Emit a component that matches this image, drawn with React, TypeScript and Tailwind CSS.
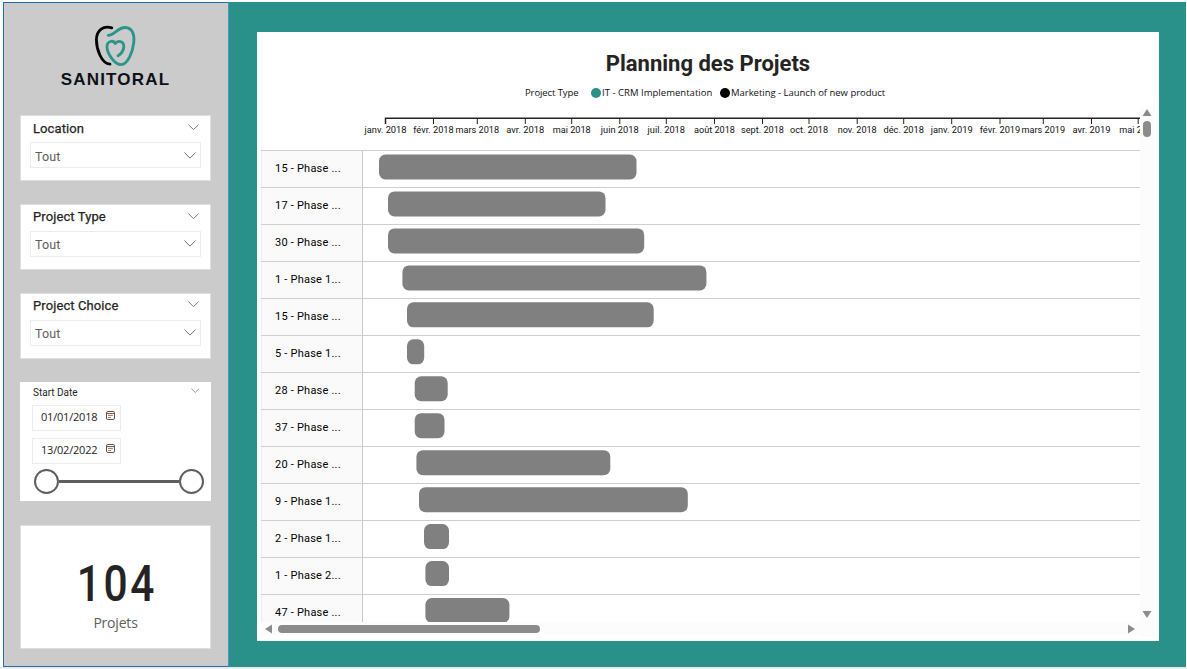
import React from "react";

const rows = [
  { label: "15 - Phase ...", start: 379, end: 636.5 },
  { label: "17 - Phase ...", start: 388, end: 605.5 },
  { label: "30 - Phase ...", start: 388, end: 644.2 },
  { label: "1 - Phase 1...", start: 402.4, end: 706.4 },
  { label: "15 - Phase ...", start: 407, end: 653.7 },
  { label: "5 - Phase 1...", start: 407, end: 424.2 },
  { label: "28 - Phase ...", start: 414.7, end: 447.7 },
  { label: "37 - Phase ...", start: 414.7, end: 444.5 },
  { label: "20 - Phase ...", start: 416.4, end: 610.3 },
  { label: "9 - Phase 1...", start: 419, end: 687.8 },
  { label: "2 - Phase 1...", start: 424, end: 449 },
  { label: "1 - Phase 2...", start: 425.4, end: 449 },
  { label: "47 - Phase ...", start: 425.4, end: 509.4 },
];

const months = [
  { label: "janv. 2018", x: 385.5, w: 42 },
  { label: "févr. 2018", x: 433.5, w: 40.5 },
  { label: "mars 2018", x: 477.3, w: 43.5 },
  { label: "avr. 2018", x: 525.3, w: 38 },
  { label: "mai 2018", x: 571.7, w: 38 },
  { label: "juin 2018", x: 619.8, w: 38 },
  { label: "juil. 2018", x: 666.3, w: 37.5 },
  { label: "août 2018", x: 714.5, w: 41 },
  { label: "sept. 2018", x: 762.5, w: 43 },
  { label: "oct. 2018", x: 809, w: 38 },
  { label: "nov. 2018", x: 857.2, w: 39 },
  { label: "déc. 2018", x: 903.7, w: 40.5 },
  { label: "janv. 2019", x: 951.7, w: 42 },
  { label: "févr. 2019", x: 1000, w: 40.5 },
  { label: "mars 2019", x: 1043.3, w: 43.5 },
  { label: "avr. 2019", x: 1091.5, w: 38 },
  { label: "mai 2019", x: 1138.2, w: 38 },
];

function Chevron({ size }: { size: number }) {
  return (
    <svg width={size} height={size / 2 + 1} viewBox="0 0 12 7" fill="none" stroke="#605e5c" strokeWidth="0.9">
      <path d="M0.5 0.7 L6 6.1 L11.5 0.7" />
    </svg>
  );
}

function Logo() {
  return (
    <div className="flex h-[112px] flex-col items-center pt-[21px] pr-0.5">
      <svg width="44" height="44" viewBox="0.6 0 44 44" fill="none" strokeLinecap="round">
        <path d="M19.4 3.9 C11 1.2 4.4 6 4 15.5 C4 25 9 39.8 17.6 40.2" stroke="#050505" strokeWidth="2.8" />
        <path d="M15.8 11.4 C22.5 11.2 25 3.4 33 3.5 C40 4 42.3 10.5 41.4 18.5 C40.2 28 35.5 40.5 28.6 40.6 C22 40.6 14.6 29 14.6 23 C14.6 16.6 21 15.8 22.9 19.6 C25.2 15.8 31.8 16.8 31.4 23 C31 27 28.8 29.8 25.6 31.8" stroke="#29958b" strokeWidth="2.8" strokeLinejoin="round" />
      </svg>
      <div className="-mt-px -mr-px font-['Liberation_Sans'] text-[17px] leading-[26px] font-bold tracking-[1.2px] text-[#0d1117]">
        SANITORAL
      </div>
    </div>
  );
}

function Slicer({ title }: { title: string }) {
  return (
    <section className="h-[66px] border border-[#dedede] bg-white px-[9px]">
      <div className="flex h-[26px] items-center justify-between pr-0.5 pl-[3px]">
        <h2 className="-mt-px text-[13px] leading-4 tracking-[0.1px] text-[#252423] [-webkit-text-stroke:0.25px_#252423]">{title}</h2>
        <div className="-mt-1"><Chevron size={11} /></div>
      </div>
      <div className="flex h-[26px] items-center justify-between border border-[#ececec] pr-1 pl-1">
        <span className="mt-1 text-[12.5px] tracking-[0.1px] text-[#605e5c]">Tout</span>
        <Chevron size={12} />
      </div>
    </section>
  );
}

function DateInput({ value }: { value: string }) {
  return (
    <div className="flex h-[26px] w-[89px] items-center border border-[#ececec] pl-2">
      <span className="w-[65px] font-['Open_Sans'] text-[11px] tracking-[-0.2px] text-[#252423]">{value}</span>
      <svg className="-mt-1" width="9" height="9" viewBox="0 0 9 9" fill="none">
        <rect x="0.5" y="0.5" width="8" height="8" rx="1.4" stroke="#665348" />
        <path d="M1 2.6H8" stroke="#665348" />
        <path d="M2 4.5H7M2 6.5H5" stroke="#b86c49" strokeWidth="0.9" />
      </svg>
    </div>
  );
}

function Arrow({ points }: { points: string }) {
  return (
    <svg width="10" height="10" viewBox="0 0 10 10" fill="#8b8b8b"><polygon points={points} /></svg>
  );
}

export default function App() {
  return (
    <div className="h-[669px] w-[1187px] overflow-hidden bg-[#e9e9e9] font-[Roboto,sans-serif]">
      <div className="flex h-[667px] bg-white pt-0.5 pl-[3px]">
        <aside className="w-[226px] shrink-0 border border-[#1f6fb8] border-r-[#4c93c4] bg-[#cbcbcb] px-4">
          <Logo />
          <div className="flex w-[191px] flex-col gap-6">
            <div className="flex flex-col gap-[22.8px]">
              <Slicer title="Location" />
              <Slicer title="Project Type" />
              <Slicer title="Project Choice" />
            </div>
            <section className="-mt-px h-[119px] bg-white px-3">
              <div className="flex h-[23px] items-center justify-between pl-px">
                <h2 className="-mt-0.5 text-[10px] text-[#252423]">Start Date</h2>
                <div className="-mt-1"><Chevron size={8.5} /></div>
              </div>
              <div className="flex flex-col gap-[7px]">
                <DateInput value="01/01/2018" />
                <DateInput value="13/02/2022" />
              </div>
              <div className="mt-[5px] -mr-2 ml-0.5 flex items-center">
                <div className="size-[25px] shrink-0 rounded-full border-2 border-[#605e5c] bg-white" />
                <div className="h-[3px] w-[120px] bg-[#605e5c]" />
                <div className="size-[25px] shrink-0 rounded-full border-2 border-[#605e5c] bg-white" />
              </div>
            </section>
            <section className="flex h-[124px] flex-col items-center border border-[#dedede] bg-white pt-[29px]">
              <div className="scale-x-[0.85] pl-1 text-[50px] leading-[58px] font-medium tracking-[3px] text-[#252423]">104</div>
              <div className="font-['Open_Sans'] text-[14px] leading-5 tracking-[-0.2px] text-[#605e5c]">Projets</div>
            </section>
          </div>
        </aside>

        <main className="h-[665px] w-[957px] bg-[#29918a] pt-[30px] pl-7">
          <div className="flex h-[609px] w-[902px] flex-col bg-white pt-4 pl-1">
            <h1 className="h-8 pr-1 text-center text-[22px] leading-8 font-bold text-[#252423]">Planning des Projets</h1>
            <div className="flex h-[26px] items-center pl-[264px] font-['Open_Sans'] text-[9.5px] text-[#111]">
              <span className="w-[66px] tracking-[-0.1px]">Project Type</span>
              <span className="mr-px size-[10px] rounded-full bg-[#29918a]" />
              <span className="w-[118px] tracking-[0.03px] whitespace-nowrap">IT - CRM Implementation</span>
              <span className="mr-px size-[10px] rounded-full bg-black" />
              <span className="tracking-[-0.02px] whitespace-nowrap">Marketing - Launch of new product</span>
            </div>
            <div className="flex">
              <div className="w-[879px]">
                <svg className="block" width="879" height="44" viewBox="261 106 879 44">
                  <path d="M385.5 124V118.3H1140" fill="none" stroke="#252423" strokeWidth="1.5" />
                  {months.map((m) => (
                    <g key={m.label}>
                      <path d={`M${m.x} 118V124`} stroke="#252423" />
                      <text x={m.x - m.w / 2} y="133" textLength={m.w} lengthAdjust="spacingAndGlyphs" fontFamily="Roboto" fontSize="9.3" fill="#111">
                        {m.label}
                      </text>
                    </g>
                  ))}
                </svg>
                <div className="h-[472px] overflow-hidden">
                  {rows.map((r, i) => (
                    <div key={i} className="flex h-[37px] border-t border-[#cfcfcf]">
                      <div className="w-[102px] shrink-0 border-r border-l border-r-[#c8c8c8] border-l-[#ececec] bg-[#fafafa] pl-[13px] text-[11px] leading-[35px] tracking-[0.22px] whitespace-pre text-black">
                        {r.label}
                      </div>
                      <svg className="mt-[3px] block" width="777" height="26" viewBox="363 0 777 26">
                        <rect x={r.start} y={0.5 - i * 0.04} width={r.end - r.start} height="25" rx="6.5" fill="#808080" />
                      </svg>
                    </div>
                  ))}
                </div>
                <div className="flex h-[13px] items-center bg-[#fcfcfc] pl-[3px]">
                  <Arrow points="8,0.5 8,9.5 1,5" />
                  <div className="ml-1 h-2 w-[262px] rounded-full bg-[#8b8b8b]" />
                  <div className="ml-auto pr-[3px]"><Arrow points="1,0.5 1,9.5 8,5" /></div>
                </div>
              </div>
              <div className="flex h-[531px] w-[14px] flex-col items-center bg-[#fcfcfc] pt-0.5 pb-[17px]">
                <Arrow points="0.5,8 9.5,8 5,1" />
                <div className="mt-[3px] h-4 w-2 rounded-full bg-[#8b8b8b]" />
                <div className="mt-auto"><Arrow points="0.5,1 9.5,1 5,8" /></div>
              </div>
            </div>
          </div>
        </main>
      </div>
    </div>
  );
}
